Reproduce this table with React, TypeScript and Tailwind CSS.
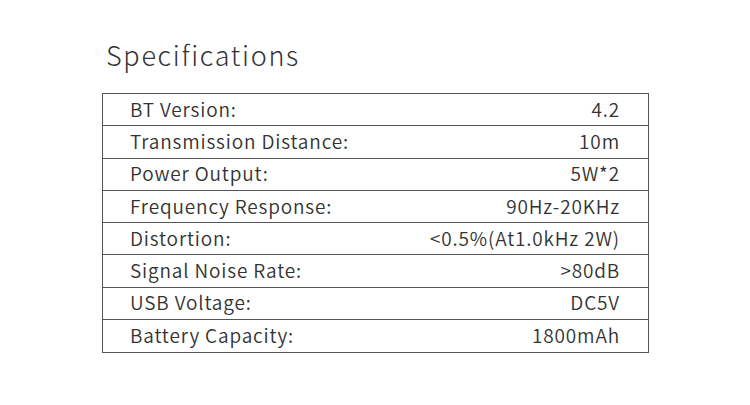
const specs: [string, string][] = [
  ["BT Version:", "4.2"],
  ["Transmission Distance:", "10m"],
  ["Power Output:", "5W*2"],
  ["Frequency Response:", "90Hz-20KHz"],
  ["Distortion:", "<0.5%(At1.0kHz 2W)"],
  ["Signal Noise Rate:", ">80dB"],
  ["USB Voltage:", "DC5V"],
  ["Battery Capacity:", "1800mAh"],
];

export default function App() {
  return (
    <div
      className="h-[405px] w-[750px] bg-white pl-[102px] pt-[35px] text-[#333]"
      style={{ fontFamily: '"Noto Sans CJK SC", "Noto Sans", sans-serif' }}
    >
      <h2 className="pl-[4px] text-[27px] font-light leading-[40px] tracking-[1.7px]">Specifications</h2>
      <div className="mt-[18px] w-[547px] border border-[#555]">
        {specs.map(([label, value], i) => (
          <div
            key={label}
            className={`flex h-[32.25px] items-center justify-between pb-[1px] pl-[27px] pr-[28px] text-[19px] font-[350] tracking-[0.85px] ${
              i < specs.length - 1 ? "border-b border-[#555]" : ""
            }`}
          >
            <span>{label}</span>
            <span>{value}</span>
          </div>
        ))}
      </div>
    </div>
  );
}
